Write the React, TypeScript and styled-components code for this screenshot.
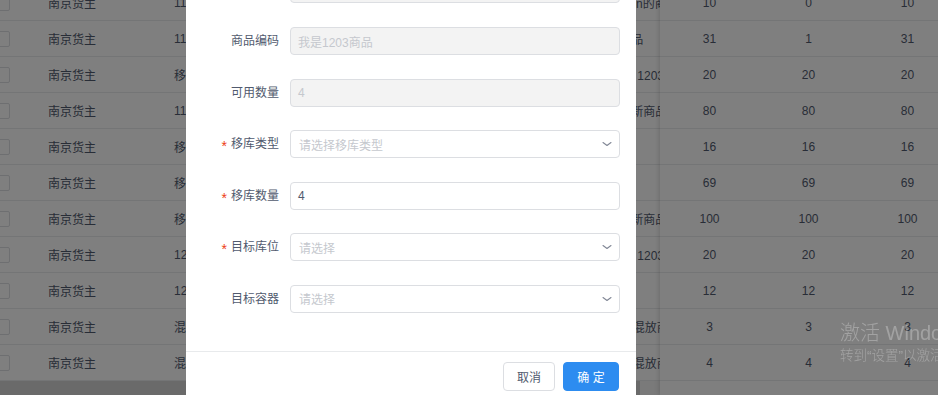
import styled, { createGlobalStyle } from "styled-components";

const GlobalStyle = createGlobalStyle`
  html, body {
    margin: 0;
    padding: 0;
    overflow: hidden;
    background: #fff;
  }
  body {
    font-family: "Liberation Sans", "Noto Sans CJK SC", sans-serif;
    font-size: 12px;
    color: #515a6e;
  }
  * {
    box-sizing: border-box;
  }
`;

interface StockRow {
  owner: string;
  code: string;
  name: string;
  total: number;
  locked: number;
  usable: number;
}

const rows: StockRow[] = [
  { owner: "南京货主", code: "1101", name: "测试商品admin的商品", total: 10, locked: 0, usable: 10 },
  { owner: "南京货主", code: "1102", name: "我是12031商品", total: 31, locked: 1, usable: 31 },
  { owner: "南京货主", code: "移库商品", name: "移库测试用例 1203商品", total: 20, locked: 20, usable: 20 },
  { owner: "南京货主", code: "1103", name: "移库12034最新商品", total: 80, locked: 80, usable: 80 },
  { owner: "南京货主", code: "移库商品", name: "移库", total: 16, locked: 16, usable: 16 },
  { owner: "南京货主", code: "移库商品", name: "移库", total: 69, locked: 69, usable: 69 },
  { owner: "南京货主", code: "移库商品", name: "移库12034最新商品", total: 100, locked: 100, usable: 100 },
  { owner: "南京货主", code: "1203", name: "移库测试用例 1203商品", total: 20, locked: 20, usable: 20 },
  { owner: "南京货主", code: "1204", name: "测试", total: 12, locked: 12, usable: 12 },
  { owner: "南京货主", code: "混放商品", name: "测试1234567混放商品", total: 3, locked: 3, usable: 3 },
  { owner: "南京货主", code: "混放商品", name: "测试1234567混放商品", total: 4, locked: 4, usable: 4 },
];

/* ---------- background table ---------- */

const Page = styled.div`
  position: relative;
  width: 938px;
  height: 395px;
  overflow: hidden;
`;

const TableWrap = styled.div`
  display: flex;
  margin-top: -15px;
`;

const MainPane = styled.div`
  width: 660px;
  flex: none;
  overflow: hidden;
`;

const FixedPane = styled.div`
  flex: 1;
  background: #fff;
  box-shadow: -2px 0 6px -2px rgba(0, 0, 0, 0.2);
  position: relative;
`;

const MainRow = styled.div`
  display: grid;
  grid-template-columns: 38px 126px 390px 106px;
  height: 36px;
  align-items: center;
  border-bottom: 1px solid #e8eaec;
  background: #fff;
`;

const FixedRow = styled.div`
  display: grid;
  grid-template-columns: 99px 99px 99px;
  height: 36px;
  align-items: center;
  border-bottom: 1px solid #e8eaec;
`;

const Cell = styled.div<{ $pad?: number; $center?: boolean }>`
  padding: 0 ${(p) => p.$pad ?? 10}px;
  white-space: nowrap;
  overflow: hidden;
  text-align: ${(p) => (p.$center ? "center" : "left")};
  font-size: 12px;
  color: #515a6e;
`;

const CheckCell = styled.div`
  display: flex;
  align-items: center;
`;

const CheckBox = styled.span`
  display: block;
  width: 16px;
  height: 16px;
  margin-left: -6px;
  border: 1px solid #dcdee2;
  border-radius: 2px;
  background: #fff;
`;

const ScrollTrack = styled.div`
  height: 16px;
  background: #f4f4f4;
  display: flex;
`;

const ScrollThumb = styled.div`
  width: 640px;
  height: 100%;
  background: #d4d4d4;
`;

/* ---------- modal ---------- */

const Mask = styled.div`
  position: fixed;
  inset: 0;
  background: rgba(0, 0, 0, 0.5);
  z-index: 10;
`;

const Modal = styled.div`
  position: fixed;
  left: 186px;
  top: -40.6px;
  width: 450px;
  background: #fff;
  z-index: 11;
`;

const ModalBody = styled.div`
  padding: 16px 16px 14.4px;
`;

const FormItem = styled.div`
  display: flex;
  align-items: center;
  margin-bottom: 23.6px;
`;

const Label = styled.label<{ $required?: boolean }>`
  width: 88px;
  flex: none;
  padding-right: 11px;
  text-align: right;
  font-size: 12px;
  color: #515a6e;
  line-height: 28px;

  &::before {
    content: "${(p) => (p.$required ? "*" : "")}";
    display: inline-block;
    margin-right: 4px;
    font-family: "Liberation Sans", sans-serif;
    font-size: 14px;
    line-height: 1;
    color: #ed4014;
    transform: translateY(3px);
  }
`;

const Field = styled.div<{ $disabled?: boolean }>`
  flex: 1;
  height: 28px;
  display: flex;
  align-items: center;
  justify-content: space-between;
  padding: 0 7px;
  border: 1px solid #dcdee2;
  border-radius: 4px;
  background: ${(p) => (p.$disabled ? "#f3f3f3" : "#fff")};
  color: ${(p) => (p.$disabled ? "#c5c8ce" : "#515a6e")};
  font-size: 12px;
`;

const Placeholder = styled.span`
  color: #c5c8ce;
  padding-left: 1px;
`;

const Footer = styled.div`
  border-top: 1px solid #e8eaec;
  padding: 10px 17px 16px;
  display: flex;
  justify-content: flex-end;
  gap: 8px;
`;

const Button = styled.button<{ $primary?: boolean; $w: number }>`
  width: ${(p) => p.$w}px;
  height: 29px;
  padding: 0;
  border-radius: 4px;
  font-family: "Liberation Sans", "Noto Sans CJK SC", sans-serif;
  font-size: 12px;
  white-space: pre;
  border: 1px solid ${(p) => (p.$primary ? "#2d8cf0" : "#dcdee2")};
  background: ${(p) => (p.$primary ? "#2d8cf0" : "#fff")};
  color: ${(p) => (p.$primary ? "#fff" : "#515a6e")};
`;

const Watermark = styled.div`
  position: fixed;
  left: 840px;
  top: 319px;
  z-index: 20;
  color: rgba(255, 255, 255, 0.28);
  font-family: "Liberation Sans", "Noto Sans CJK SC", sans-serif;
  font-weight: 300;
  white-space: nowrap;
  pointer-events: none;
`;

const WatermarkTitle = styled.div`
  font-size: 20px;
  line-height: 28px;
`;

const WatermarkSub = styled.div`
  font-size: 13.5px;
  line-height: 18px;
`;

const Arrow = () => (
  <svg width="14" height="14" viewBox="0 0 14 14">
    <path d="M5 5.5 L9 8.5 L13 5.5" fill="none" stroke="#808695" strokeWidth="1.1" strokeLinecap="round" strokeLinejoin="round" />
  </svg>
);

interface ItemProps {
  label: string;
  required?: boolean;
  children: React.ReactNode;
}

const Item = ({ label, required, children }: ItemProps) => (
  <FormItem>
    <Label $required={required}>{label}</Label>
    {children}
  </FormItem>
);

export default function App() {
  return (
    <Page>
      <GlobalStyle />
      <TableWrap>
        <MainPane>
          {rows.map((r, i) => (
            <MainRow key={i}>
              <CheckCell>
                <CheckBox />
              </CheckCell>
              <Cell>{r.owner}</Cell>
              <Cell>{r.code}</Cell>
              <Cell $pad={8}>{r.name}</Cell>
            </MainRow>
          ))}
          <ScrollTrack>
            <ScrollThumb />
          </ScrollTrack>
        </MainPane>
        <FixedPane>
          {rows.map((r, i) => (
            <FixedRow key={i}>
              <Cell $center>{r.total}</Cell>
              <Cell $center>{r.locked}</Cell>
              <Cell $center>{r.usable}</Cell>
            </FixedRow>
          ))}
        </FixedPane>
      </TableWrap>

      <Mask />
      <Modal>
        <ModalBody>
          <Item label="商品名称">
            <Field $disabled>我是1203商品</Field>
          </Item>
          <Item label="商品编码">
            <Field $disabled>我是1203商品</Field>
          </Item>
          <Item label="可用数量">
            <Field $disabled>4</Field>
          </Item>
          <Item label="移库类型" required>
            <Field>
              <Placeholder>请选择移库类型</Placeholder>
              <Arrow />
            </Field>
          </Item>
          <Item label="移库数量" required>
            <Field>4</Field>
          </Item>
          <Item label="目标库位" required>
            <Field>
              <Placeholder>请选择</Placeholder>
              <Arrow />
            </Field>
          </Item>
          <Item label="目标容器">
            <Field>
              <Placeholder>请选择</Placeholder>
              <Arrow />
            </Field>
          </Item>
        </ModalBody>
        <Footer>
          <Button $w={52}>取消</Button>
          <Button $w={56} $primary>
            {"确 定"}
          </Button>
        </Footer>
      </Modal>

      <Watermark>
        <WatermarkTitle>激活 Windows</WatermarkTitle>
        <WatermarkSub>转到“设置”以激活 Windows。</WatermarkSub>
      </Watermark>
    </Page>
  );
}
